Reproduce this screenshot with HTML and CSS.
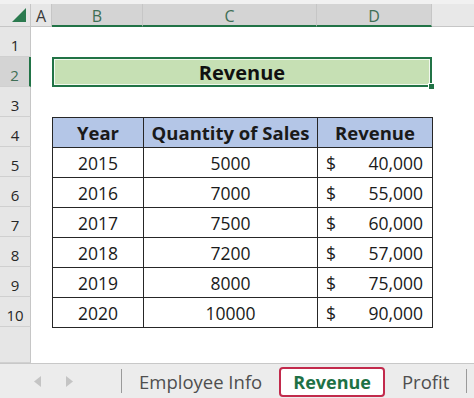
FILE: index.html
```html
<!DOCTYPE html>
<html lang="en">
  <head>
    <meta charset="UTF-8" />
    <meta name="viewport" content="width=device-width, initial-scale=1.0" />
    <title>Revenue</title>
    <link rel="stylesheet" href="styles.css">
  </head>
  <body>
    <div class="window">
      <div class="topstrip"></div>
      <div class="sheet">
        <div class="corner">
          <svg width="14" height="14" viewBox="0 0 14 14">
            <polygon points="14,0 14,14 0,14" fill="#2b7a4f" />
          </svg>
        </div>
        <div class="colhead">A</div>
        <div class="colhead selected">B</div>
        <div class="colhead selected">C</div>
        <div class="colhead selected">D</div>
        <div class="colhead rest"></div>

        <div class="rowhead">1</div>
        <div class="rowhead selected">2</div>
        <div class="rowhead">3</div>
        <div class="rowhead">4</div>
        <div class="rowhead">5</div>
        <div class="rowhead">6</div>
        <div class="rowhead">7</div>
        <div class="rowhead">8</div>
        <div class="rowhead">9</div>
        <div class="rowhead">10</div>
        <div class="rowhead"></div>

        <div class="title">Revenue</div>

        <table class="data">
          <colgroup>
            <col class="c-year" />
            <col class="c-qty" />
            <col class="c-rev" />
          </colgroup>
          <tr>
            <th>Year</th>
            <th>Quantity of Sales</th>
            <th>Revenue</th>
          </tr>
          <tr><td>2015</td><td>5000</td><td><span class="money"><span>$</span><span>40,000</span></span></td></tr>
          <tr><td>2016</td><td>7000</td><td><span class="money"><span>$</span><span>55,000</span></span></td></tr>
          <tr><td>2017</td><td>7500</td><td><span class="money"><span>$</span><span>60,000</span></span></td></tr>
          <tr><td>2018</td><td>7200</td><td><span class="money"><span>$</span><span>57,000</span></span></td></tr>
          <tr><td>2019</td><td>8000</td><td><span class="money"><span>$</span><span>75,000</span></span></td></tr>
          <tr><td>2020</td><td>10000</td><td><span class="money"><span>$</span><span>90,000</span></span></td></tr>
        </table>
      </div>

      <div class="tabbar">
        <div class="nav">
          <svg width="7" height="11" viewBox="0 0 7 11">
            <polygon points="7,0 7,11 0,5.5" fill="#c4c4c4" />
          </svg>
          <svg width="7" height="11" viewBox="0 0 7 11">
            <polygon points="0,0 0,11 7,5.5" fill="#c4c4c4" />
          </svg>
        </div>
        <div class="sep"></div>
        <div class="tab">Employee Info</div>
        <div class="tab active">Revenue</div>
        <div class="tab">Profit</div>
        <div class="sep"></div>
      </div>
    </div>
  </body>
</html>
```

FILE: styles.css
```css
body {
  margin: 0;
  background: #ffffff;
  font-family: "Open Sans", "Liberation Sans", sans-serif;
  overflow: hidden;
}

.window {
  width: 474px;
  height: 398px;
  display: flex;
  flex-direction: column;
}

.topstrip {
  height: 4px;
  background: #f1f1f1;
}

.sheet {
  flex: 1;
  min-height: 0;
  display: grid;
  grid-template-columns: 31px 21px 91px 174px 115px 1fr;
  grid-template-rows: 23px repeat(10, 30px) 1fr;
  background: #ffffff;
}

.corner {
  background: #e6e6e6;
  border-right: 1px solid #c6c6c6;
  border-bottom: 1px solid #c6c6c6;
  display: flex;
  align-items: flex-end;
  justify-content: flex-end;
  padding: 0 4px 4px 0;
}

.colhead {
  background: #e6e6e6;
  border-right: 1px solid #c6c6c6;
  border-bottom: 1px solid #c6c6c6;
  color: #3a3a3a;
  font-size: 16px;
  display: flex;
  align-items: center;
  justify-content: center;
  padding-top: 2px;
}

.colhead.selected {
  background: #d4d4d4;
  color: #3f6f56;
  border-bottom: 2px solid #217346;
}

.colhead.rest {
  border-right: none;
  background: #e8e8e8;
}

.rowhead {
  grid-column: 1;
  background: #e6e6e6;
  border-right: 1px solid #c6c6c6;
  border-bottom: 1px solid #d0d0d0;
  color: #262626;
  font-size: 15px;
  display: flex;
  align-items: flex-end;
  justify-content: center;
  padding-bottom: 1px;
}

.rowhead.selected {
  background: #d4d4d4;
  color: #3f6f56;
  border-right: 2px solid #217346;
}

.rowhead:last-child {
  border-bottom: none;
}

.title {
  grid-column: 3 / 6;
  grid-row: 3;
  position: relative;
  background: #c6e0b4;
  border: 2px solid #217346;
  box-shadow: inset 0 0 0 1px #f2f8ee;
  font-weight: 700;
  font-size: 20px;
  color: #111111;
  display: flex;
  align-items: center;
  justify-content: center;
}

.title::after {
  content: "";
  position: absolute;
  right: -5px;
  bottom: -5px;
  width: 5px;
  height: 5px;
  background: #217346;
  border: 1px solid #ffffff;
}

.data {
  grid-column: 3 / 6;
  grid-row: 5 / 12;
  align-self: start;
  border-collapse: collapse;
  table-layout: fixed;
  width: 380px;
  height: 210px;
  color: #1a1a1a;
}

.data tr {
  height: 30px;
}

.c-year {
  width: 91px;
}

.c-qty {
  width: 174px;
}

.c-rev {
  width: 115px;
}

.data th,
.data td {
  border: 1.5px solid #262626;
  padding: 0;
  line-height: 20px;
  text-align: center;
  vertical-align: middle;
}

.data th {
  background: #b4c6e7;
  font-weight: 700;
  font-size: 18.5px;
}

.data td {
  font-size: 17.5px;
}

.money {
  display: flex;
  justify-content: space-between;
  padding: 0 9px 0 8px;
}

.tabbar {
  height: 35px;
  flex-shrink: 0;
  box-sizing: border-box;
  border-top: 1px solid #c8c8c8;
  background: #ececec;
  display: flex;
  align-items: center;
  gap: 17px;
}

.nav {
  width: 104px;
  box-sizing: border-box;
  padding-left: 34px;
  display: flex;
  gap: 25px;
}

.sep {
  width: 1px;
  height: 24px;
  background: #9a9a9a;
}

.tab {
  font-size: 18.5px;
  color: #4f4f4f;
}

.tab.active {
  background: #ffffff;
  border: 2px solid #c22a4c;
  border-radius: 4px;
  height: 30px;
  box-sizing: border-box;
  padding: 0 12px;
  display: flex;
  align-items: center;
  font-weight: 700;
  font-size: 18px;
  color: #1e7145;
  margin-top: 1px;
}
```
